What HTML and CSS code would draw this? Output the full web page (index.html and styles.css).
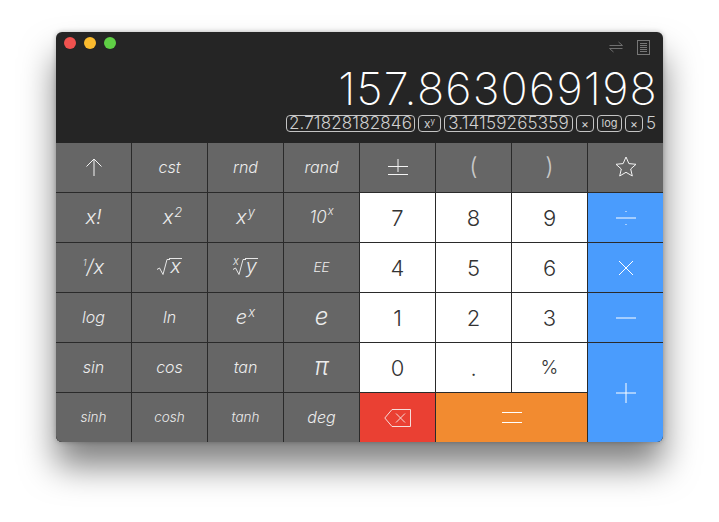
FILE: index.html
```html
<!DOCTYPE html>
<html lang="en">

<head>
  <meta charset="UTF-8">
  <title>Calculator</title>
  <link rel="stylesheet" href="styles.css">
</head>

<body>
  <div class="window">
    <div class="display">
      <div class="titlebar">
        <span class="dot red"></span>
        <span class="dot yellow"></span>
        <span class="dot green"></span>
        <span class="spacer"></span>
        <svg class="tool" width="14" height="12" viewBox="0 0 14 12">
          <path d="M0.5 4.5H13.5L9.5 1M13.5 7.5H0.5L4.5 11" fill="none" stroke="#6f6f6f" />
        </svg>
        <svg class="tool" width="13" height="15" viewBox="0 0 13 15">
          <rect x="0.5" y="0.5" width="12" height="14" fill="none" stroke="#777" />
          <path d="M3 3.5H10M3 5.5H10M3 7.5H10M3 9.5H10M3 11.5H10" stroke="#777" />
        </svg>
      </div>
      <div class="value">157.863069198</div>
      <div class="tape">
        <span class="token num">2.71828182846</span>
        <span class="token op power">x<sup>y</sup></span>
        <span class="token num">3.14159265359</span>
        <span class="token op">×</span>
        <span class="token op log">log</span>
        <span class="token op">×</span>
        <span class="last">5</span>
      </div>
    </div>

    <div class="keys">
      <button class="key fn">
        <svg width="18" height="18" viewBox="0 0 18 18">
          <path d="M9 18V1M1.5 8.5L9 1L16.5 8.5" fill="none" stroke="#f4f4f4" />
        </svg>
      </button>
      <button class="key fn">cst</button>
      <button class="key fn">rnd</button>
      <button class="key fn">rand</button>
      <button class="key fn">
        <svg width="20" height="16" viewBox="0 0 20 16">
          <path d="M0 7.5H20M10 0V13M0 15.5H20" fill="none" stroke="#f4f4f4" />
        </svg>
      </button>
      <button class="key fn paren">(</button>
      <button class="key fn paren">)</button>
      <button class="key fn">
        <svg width="22" height="21" viewBox="0 0 22 21">
          <path d="M11 1L13.9 7.6L21 8.3L15.7 13L17.3 20L11 16.3L4.7 20L6.3 13L1 8.3L8.1 7.6Z" fill="none" stroke="#f4f4f4" />
        </svg>
      </button>

      <button class="key fn large">x!</button>
      <button class="key fn large shift">x<sup>2</sup></button>
      <button class="key fn large">x<sup>y</sup></button>
      <button class="key fn ten">10<sup>x</sup></button>
      <button class="key digit">7</button>
      <button class="key digit">8</button>
      <button class="key digit">9</button>
      <button class="key blue">
        <svg width="20" height="16" viewBox="0 0 20 16">
          <path d="M0 8H20" stroke="#fff" />
          <rect x="9.5" y="1" width="1" height="1" fill="#fff" />
          <rect x="9.5" y="14" width="1" height="1" fill="#fff" />
        </svg>
      </button>

      <button class="key fn large"><sup class="frac">1</sup>/x</button>
      <button class="key fn large root">
        <svg width="13" height="16" viewBox="0 0 13 16">
          <path d="M0 10.5L2.5 9L6 15.5L10 0.5H13" fill="none" stroke="#e6e6e6" />
        </svg><span class="radicand">x</span>
      </button>
      <button class="key fn large root">
        <sup class="index">x</sup><svg width="13" height="16" viewBox="0 0 13 16">
          <path d="M0 10.5L2.5 9L6 15.5L10 0.5H13" fill="none" stroke="#e6e6e6" />
        </svg><span class="radicand">y</span>
      </button>
      <button class="key fn small">EE</button>
      <button class="key digit">4</button>
      <button class="key digit">5</button>
      <button class="key digit">6</button>
      <button class="key blue">
        <svg width="16" height="16" viewBox="0 0 16 16">
          <path d="M1 1L15 15M15 1L1 15" stroke="#fff" />
        </svg>
      </button>

      <button class="key fn">log</button>
      <button class="key fn">ln</button>
      <button class="key fn large">e<sup>x</sup></button>
      <button class="key fn huge">e</button>
      <button class="key digit">1</button>
      <button class="key digit">2</button>
      <button class="key digit">3</button>
      <button class="key blue">
        <svg width="20" height="2" viewBox="0 0 20 2">
          <path d="M0 1H20" stroke="#fff" />
        </svg>
      </button>

      <button class="key fn">sin</button>
      <button class="key fn">cos</button>
      <button class="key fn">tan</button>
      <button class="key fn huge">π</button>
      <button class="key digit">0</button>
      <button class="key digit">.</button>
      <button class="key digit percent">%</button>
      <button class="key blue plus">
        <svg width="20" height="20" viewBox="0 0 20 20">
          <path d="M0 10H20M10 0V20" stroke="#fff" />
        </svg>
      </button>

      <button class="key fn small">sinh</button>
      <button class="key fn small">cosh</button>
      <button class="key fn small">tanh</button>
      <button class="key fn">deg</button>
      <button class="key red-key">
        <svg width="27" height="18" viewBox="0 0 27 18">
          <path d="M26.5 0.5H8L0.8 9L8 17.5H26.5Z" fill="none" stroke="#f6dcd9" />
          <path d="M12 4.5L21 13.5M21 4.5L12 13.5" stroke="#f6dcd9" />
        </svg>
      </button>
      <button class="key equals">
        <svg width="20" height="11" viewBox="0 0 20 11">
          <path d="M0 0.5H20M0 10.5H20" stroke="#fff" />
        </svg>
      </button>
    </div>
  </div>
</body>

</html>
```

FILE: styles.css
```css
html {
  background: #fff;
}

body {
  margin: 0;
  padding: 32px 56px 0;
  height: 522px;
  box-sizing: border-box;
  overflow: hidden;
  font-family: Inter, "Liberation Sans", sans-serif;
}

.window {
  width: 607px;
  border-radius: 6px;
  background: #252525;
  box-shadow: 0 24px 34px rgba(0, 0, 0, 0.5), 0 0 5px rgba(0, 0, 0, 0.25);
}

.display {
  height: 111px;
  padding: 0 7px 0 8px;
  box-sizing: border-box;
  color: #fff;
}

.titlebar {
  display: flex;
  align-items: center;
  height: 22px;
}

.dot {
  width: 12px;
  height: 12px;
  border-radius: 50%;
  margin-right: 8px;
}

.red {
  background: #f0524f;
}

.yellow {
  background: #fbbb2e;
}

.green {
  background: #5fcf45;
}

.spacer {
  flex: 1;
}

.tool {
  margin-top: 8px;
  margin-right: 6px;
  margin-left: 8px;
}

.value {
  margin-top: 9px;
  margin-right: -2px;
  font-size: 45px;
  font-weight: 200;
  line-height: 52px;
  letter-spacing: 1.2px;
  text-align: right;
}

.tape {
  display: flex;
  justify-content: flex-end;
  gap: 3px;
  height: 17px;
  color: #d0d0d0;
  font-weight: 300;
}

.token {
  display: flex;
  align-items: center;
  justify-content: center;
  height: 17px;
  box-sizing: border-box;
  border: 1px solid #c4c4c4;
  border-radius: 4px;
  line-height: 15px;
}

.num {
  width: 129px;
  font-size: 17px;
  letter-spacing: 0.15px;
}

.op {
  width: 18px;
  font-size: 12px;
  font-weight: 400;
}

.power {
  width: 23px;
}

.log {
  width: 25px;
  font-size: 11px;
}

.token sup {
  font-size: 8px;
  line-height: 1;
  margin-top: -5px;
}

.last {
  width: 10px;
  font-size: 17px;
  line-height: 17px;
  text-align: right;
}

.keys {
  display: grid;
  grid-template-columns: repeat(8, 75px);
  grid-template-rows: repeat(6, 49px);
  gap: 1px;
  background: #2a2a2a;
  border-radius: 0 0 6px 6px;
  overflow: hidden;
}

.key {
  display: flex;
  align-items: center;
  justify-content: center;
  padding: 0;
  border: none;
  font-family: inherit;
  font-weight: 300;
}

.fn {
  padding-bottom: 2px;
  background: #666;
  color: #ececec;
  font-size: 16px;
  font-style: italic;
}

.large {
  font-size: 20px;
}

.huge {
  font-size: 24px;
}

.small {
  font-size: 13.5px;
}

.ten {
  font-size: 17px;
}

.shift {
  padding-left: 6px;
}

.key sup {
  font-size: 65%;
  line-height: 1;
  align-self: center;
  margin-top: -9px;
  margin-left: 1px;
}

.key sup.frac {
  font-size: 9px;
  margin: -8px 0 0;
}

.key sup.index {
  font-size: 11px;
  margin: -10px -6px 0 0;
}

.radicand {
  display: inline-block;
  min-width: 13px;
  border-top: 1px solid #e6e6e6;
  margin-left: -1px;
  margin-top: -1px;
  line-height: 15px;
  text-align: center;
}

.root svg {
  margin-top: 1px;
}

.paren {
  font-size: 24px;
  font-style: normal;
  color: #c8c8c8;
}

.digit {
  background: #fff;
  color: #333;
  font-size: 22px;
}

.percent {
  font-size: 19px;
}

.blue {
  background: #4a9cfd;
}

.plus {
  grid-row: span 2;
}

.red-key {
  background: #ea4033;
}

.equals {
  grid-column: span 2;
  background: #f28b30;
}
```
